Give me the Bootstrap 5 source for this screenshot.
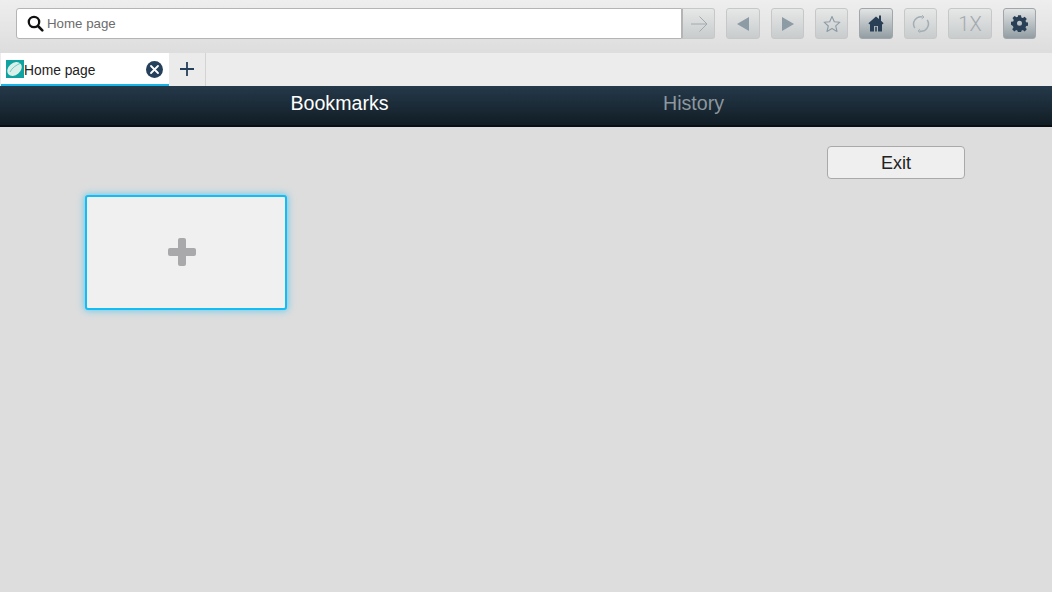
<!DOCTYPE html>
<html lang="en">
<head>
<meta charset="utf-8">
<title>Home page</title>
<link rel="stylesheet" href="https://cdn.jsdelivr.net/npm/bootstrap@5.3.0/dist/css/bootstrap.min.css">
<style>
html,body{height:592px;overflow:hidden}
body{background:#dddddd;font-family:"Liberation Sans",Arial,sans-serif;width:1052px}
.topbar{height:53px;background:linear-gradient(#eeeeee,#dddddd);padding:8px 16px 0}
.addr{width:666px;height:31px;background:#fff;border:1px solid #b4b4b4;border-radius:3px 0 0 3px;padding-left:10px;gap:3px;color:#6c6c6c;font-size:13.3px}
.tbtn{height:31px;width:33px;padding:0;border:1px solid #c6c8c8;border-radius:3px;background:linear-gradient(#e6e7e7,#c8cccd);flex:none}
.tbtn.big{width:34px}
.tbtn.wide{width:44px;font-size:20px;color:#a3aaae;font-weight:300;font-family:Roboto,"Liberation Sans",sans-serif}
.tbtn.on{background:linear-gradient(#e2e4e4,#929da3);border-color:#a0a6a9}
.tbtn.go{border-radius:0 3px 3px 0;border-left-color:#b4b4b4}
.gapa{margin-left:11px}
.tabrow{height:33px;background:#ececec}
.tabcell{width:168px;margin-left:1px;background:#fff;border-bottom:2px solid #19b5e6;font-size:13.8px;color:#222;padding-left:5px;height:33px}
.favi{width:18px;height:18px;flex:none;margin-top:1px}
.tabname{padding-top:5px}
.tabx{margin-left:auto;margin-right:6px;margin-top:1px}
.addtab{width:37px;height:33px;border-right:1px solid #d3d3d3;background:#ebebeb;padding-bottom:1px}
.mainnav{height:41px;background:linear-gradient(#25394a,#111d25);border-bottom:2px solid #0a0f12;padding-left:163px;font-size:19.6px;line-height:35px}
.navitem{width:353px;text-align:center;color:#8d979e}
.navitem.active{color:#fff}
.navitem+.navitem{margin-left:1px}
.bodyarea{height:466px}
.exitrow{padding:19px 87px 0 0}
.exitbtn{width:138px;height:33px;padding:0;background:#efefef;border:1px solid #a9a9a9;border-radius:4px;color:#222;font-size:18px;line-height:30px}
.exitbtn:hover{background:#efefef;border-color:#a9a9a9;color:#222}
.addcard{width:202px;height:115px;margin:16px 0 0 85px;background:#f0f0f0;border:2px solid #12bdf5;border-radius:3px;box-shadow:0 0 7px 1px rgba(18,189,245,.55);padding:0 8px 1px 0}
</style>
</head>
<body>
<div class="topbar d-flex align-items-start">
  <div class="addr d-flex align-items-center">
    <svg width="17" height="17" viewBox="0 0 17 17" fill="none" stroke="#111" aria-hidden="true"><circle cx="7" cy="7" r="5.200" stroke-width="2.300"/><path d="M11 11l4.300 4.300" stroke-width="2.600" stroke-linecap="round"/></svg>
    <span>Home page</span>
  </div>
  <button class="tbtn go d-flex align-items-center justify-content-center" type="button" aria-label="Go">
    <svg width="18" height="18" viewBox="0 0 18 18" fill="none" stroke="#a3aaae" stroke-width="1"><path d="M1 9h16M9.500 1.500L17 9l-7.500 7.500"/></svg>
  </button>
  <button class="tbtn big gapa d-flex align-items-center justify-content-center" type="button" aria-label="Back">
    <svg width="14" height="16" viewBox="0 0 14 16" fill="#8d9ba5"><path d="M13 1v14L1 8z"/></svg>
  </button>
  <button class="tbtn gapa d-flex align-items-center justify-content-center" type="button" aria-label="Forward">
    <svg width="14" height="16" viewBox="0 0 14 16" fill="#8d9ba5"><path d="M1 1v14l12-7z"/></svg>
  </button>
  <button class="tbtn gapa d-flex align-items-center justify-content-center" type="button" aria-label="Favorite">
    <svg width="18" height="18" viewBox="0 0 18 18" fill="none" stroke="#8d9ba5" stroke-width="1.100" stroke-linejoin="round"><path d="M9 1.500l2.300 5.200 5.600.5-4.200 3.700 1.300 5.500L9 13.600l-5 2.900 1.300-5.500L1.100 7.200l5.600-.5z"/></svg>
  </button>
  <button class="tbtn big on gapa d-flex align-items-center justify-content-center" type="button" aria-label="Home">
    <svg width="16" height="17" viewBox="0 0 16 17" fill="#283f56"><path fill-rule="evenodd" d="M8 1.500l3 2.600V.5h2v5.300l2.600 2.400-.9 1H14v7.300H2V9.200H1.300l-.9-1zM6 11v5.500h1.200V11.800h1.600V16.500H10V11z"/></svg>
  </button>
  <button class="tbtn gapa d-flex align-items-center justify-content-center" type="button" aria-label="Reload">
    <svg width="18" height="18" viewBox="0 0 18 18" fill="none" stroke="#a3aeb4" stroke-width="1.500"><path d="M2.800 13A7.300 7.300 0 0 1 10.500 1.900"/><path d="M15.200 5A7.300 7.300 0 0 1 7.500 16.100"/><path d="M10 .2l2 1.900-2.300 1.700" stroke-width="1"/><path d="M8 14.200l-2 1.800 2.300 1.700" stroke-width="1"/></svg>
  </button>
  <button class="tbtn wide gapa" type="button">1X</button>
  <button class="tbtn on gapa d-flex align-items-center justify-content-center" type="button" aria-label="Settings">
    <svg width="17" height="17" viewBox="0 0 17 17" fill="#283f56"><path fill-rule="evenodd" d="M7 .5h3l.4 2.200 1.400.6 1.900-1.300 2.100 2.100-1.300 1.900.6 1.400 2.200.4v3l-2.200.4-.6 1.400 1.300 1.900-2.100 2.100-1.900-1.300-1.400.6-.4 2.200H7l-.4-2.200-1.400-.6-1.900 1.300-2.100-2.100 1.300-1.900-.6-1.400L0 10V7l2.200-.4.6-1.400L1.500 3.300l2.100-2.100 1.900 1.300 1.400-.6zM8.500 6a2.500 2.500 0 1 0 0 5 2.500 2.500 0 0 0 0-5z" transform="translate(0 -.2)"/></svg>
  </button>
</div>
<div class="tabrow d-flex">
  <div class="tabcell d-flex align-items-center">
    <svg class="favi" viewBox="0 0 18 18" aria-hidden="true"><rect width="18" height="18" fill="#0ea3a0"/><ellipse cx="8.500" cy="9" rx="8" ry="6" fill="#d9efe9" transform="rotate(-40 8.500 9)"/><path d="M4 12C6 8 10 5 15 3" stroke="#0ea3a0" stroke-width=".5" fill="none"/></svg>
    <span class="tabname">Home page</span>
    <svg class="tabx" width="17" height="17" viewBox="0 0 17 17" aria-label="Close"><circle cx="8.500" cy="8.500" r="8.500" fill="#25405a"/><path d="M5 5l7 7M12 5l-7 7" stroke="#fff" stroke-width="1.800" stroke-linecap="round"/></svg>
  </div>
  <div class="addtab d-flex align-items-center justify-content-center">
    <svg width="16" height="16" viewBox="0 0 16 16" aria-label="New tab" stroke="#25405a" stroke-width="1.800"><path d="M8 1v14M1 8h14"/></svg>
  </div>
</div>
<nav class="mainnav d-flex">
  <div class="navitem active">Bookmarks</div>
  <div class="navitem">History</div>
</nav>
<main class="bodyarea">
  <div class="exitrow d-flex justify-content-end">
    <button class="btn exitbtn" type="button">Exit</button>
  </div>
  <div class="addcard d-flex align-items-center justify-content-center">
    <svg width="28" height="28" viewBox="0 0 28 28" fill="#a9a9ab" aria-label="Add"><rect x="10" y="0" width="8" height="28" rx="2"/><rect x="0" y="10" width="28" height="8" rx="2"/></svg>
  </div>
</main>
<script src="https://cdn.jsdelivr.net/npm/bootstrap@5.3.0/dist/js/bootstrap.bundle.min.js"></script>
</body>
</html>
